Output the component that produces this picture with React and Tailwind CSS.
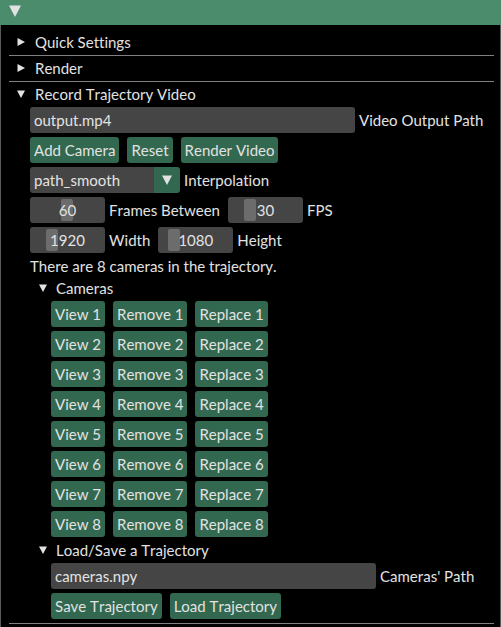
const cams = [1, 2, 3, 4, 5, 6, 7, 8]

function Tri({ down, w = 8, h = 8, className = "" }) {
  return (
    <svg width={w} height={h} viewBox={`0 0 ${w} ${h}`} className={"shrink-0 " + className}>
      {down ? (
        <polygon points={`0,0.5 ${w},0.5 ${w / 2},${h}`} fill="#e2e2e2" />
      ) : (
        <polygon points={`0.5,0 ${w},${h / 2} 0.5,${h}`} fill="#e2e2e2" />
      )}
    </svg>
  )
}

function Btn({ children }) {
  return (
    <div className="h-[26px] px-[4px] flex items-center rounded-[3px] bg-[#31684f] whitespace-nowrap">
      {children}
    </div>
  )
}

function Drag({ value, grab }) {
  return (
    <div className="relative w-[75px] h-[26px] rounded-[3px] bg-[#454545] flex items-center justify-center">
      <div className="absolute top-[2px] bottom-[2px] w-[12px] rounded-[2px] bg-[#6c6c6c]" style={{ left: grab }} />
      <span className="relative">{value}</span>
    </div>
  )
}

function Node({ children, down, top }) {
  return (
    <div className={"h-[18px] flex items-center " + (top ? "pl-[8px]" : "pl-[9px]")}>
      <Tri down={down} />
      <span className={top ? "ml-[10px]" : "ml-[9px]"}>{children}</span>
    </div>
  )
}

export default function App() {
  return (
    <div className="w-[501px] h-[627px] overflow-hidden bg-black text-[#e2e2e2] font-[Lato,sans-serif] text-[15px] leading-[18px] [font-kerning:none] [font-variant-ligatures:none]">
      {/* Title bar */}
      <div className="h-[25px] bg-[#4a8c6c] pl-[9px] pt-[5px]">
        <Tri down w={12} h={12} />
      </div>

      <div className="h-[602px] border-l border-r border-[#5a5a5a] pl-[8px] pr-[6px] pt-[8px]">
        <Node top>Quick Settings</Node>
        <div className="mt-[4px] h-px bg-[#808080]" />
        <div className="mt-[3px]">
          <Node top>Render</Node>
        </div>
        <div className="mt-[4px] h-px bg-[#808080]" />
        <div className="mt-[3px]">
          <Node top down>Record Trajectory Video</Node>
        </div>

        <div className="pl-[21px] mt-[4px] flex flex-col gap-[4px]">
          <div className="flex items-center gap-[4px]">
            <div className="w-[325px] h-[26px] rounded-[3px] bg-[#454545] px-[4px] flex items-center">output.mp4</div>
            <span>Video Output Path</span>
          </div>

          <div className="flex gap-[8px]">
            <Btn>Add Camera</Btn>
            <Btn>Reset</Btn>
            <Btn>Render Video</Btn>
          </div>

          <div className="flex items-center gap-[4px]">
            <div className="w-[150px] h-[26px] rounded-[3px] overflow-hidden flex">
              <div className="flex-1 bg-[#454545] px-[4px] flex items-center">path_smooth</div>
              <div className="w-[26px] bg-[#31684f] flex items-center justify-center">
                <Tri down w={10} h={10} />
              </div>
            </div>
            <span>Interpolation</span>
          </div>

          <div className="flex items-center">
            <Drag value="60" grab={31} />
            <span className="ml-[4px]">Frames Between</span>
            <div className="ml-[8px]">
              <Drag value="30" grab={16} />
            </div>
            <span className="ml-[4px]">FPS</span>
          </div>

          <div className="flex items-center">
            <Drag value="1920" grab={16} />
            <span className="ml-[4px]">Width</span>
            <div className="ml-[8px]">
              <Drag value="1080" grab={10} />
            </div>
            <span className="ml-[4px]">Height</span>
          </div>

          <div className="h-[18px]">There are 8 cameras in the trajectory.</div>

          <Node down>Cameras</Node>

          <div className="pl-[21px] flex flex-col gap-[4px]">
            {cams.map((n) => (
              <div key={n} className="flex gap-[8px]">
                <Btn>View {n}</Btn>
                <Btn>Remove {n}</Btn>
                <Btn>Replace {n}</Btn>
              </div>
            ))}
          </div>

          <Node down>Load/Save a Trajectory</Node>

          <div className="pl-[21px] flex flex-col gap-[4px]">
            <div className="flex items-center gap-[4px]">
              <div className="w-[325px] h-[26px] rounded-[3px] bg-[#454545] px-[4px] flex items-center">cameras.npy</div>
              <span>Cameras' Path</span>
            </div>
            <div className="flex gap-[8px]">
              <Btn>Save Trajectory</Btn>
              <Btn>Load Trajectory</Btn>
            </div>
          </div>
        </div>

        <div className="mt-[4px] h-px bg-[#808080]" />
      </div>
    </div>
  )
}
